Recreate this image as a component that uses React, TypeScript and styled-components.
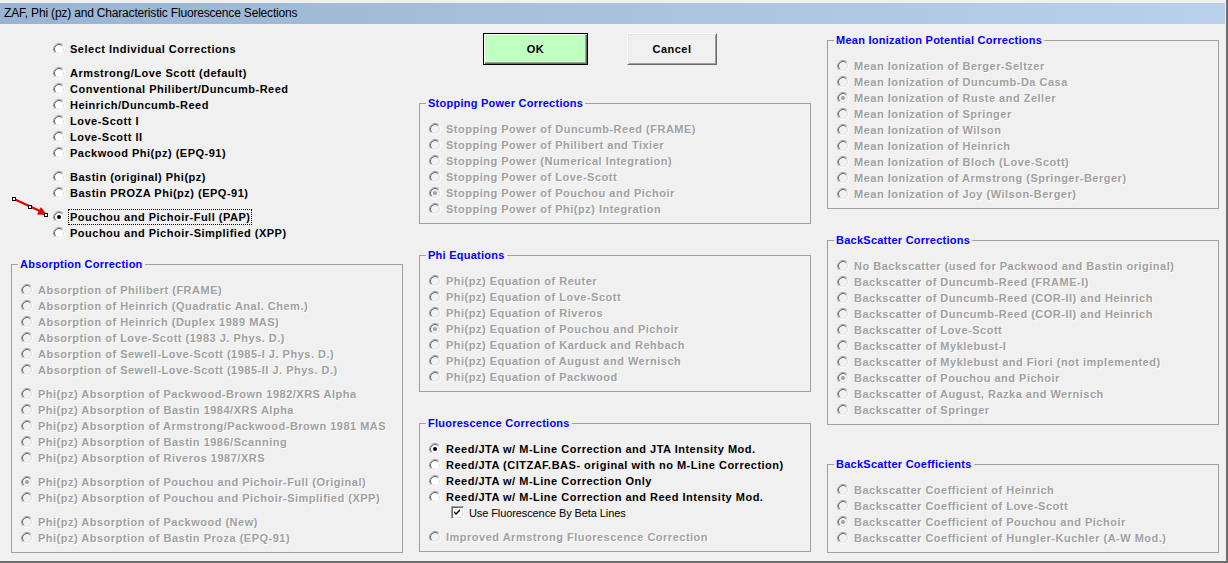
import React from "react";
import styled, { createGlobalStyle } from "styled-components";

const GlobalStyle = createGlobalStyle`
  html, body { margin: 0; padding: 0; background: #f0f0f0; }
  body { font-family: "Liberation Sans", Arial, sans-serif; }
  * { box-sizing: border-box; }
`;

const Window = styled.div`
  position: relative;
  width: 1228px;
  height: 563px;
  background: #f0f0f0;
  padding-top: 3px;
  border-right: 2px solid #6d6d6d;
  border-bottom: 2px solid #6d6d6d;
  display: flex;
  flex-direction: column;
  overflow: hidden;
`;

const TitleBar = styled.div`
  height: 21px;
  margin-right: 1px;
  padding-left: 4px;
  background: linear-gradient(to right, #99b4d1, #b9d1ea);
  font-family: "Liberation Sans", Arial, sans-serif;
  font-size: 12px;
  letter-spacing: -0.18px;
  line-height: 21px;
  color: #000;
  white-space: nowrap;
`;

const Body = styled.div`
  display: grid;
  grid-template-columns: repeat(3, 392px);
  column-gap: 16px;
  padding-left: 11px;
  align-items: start;
`;

const Column = styled.div<{ $top: number }>`
  display: flex;
  flex-direction: column;
  padding-top: ${(p) => p.$top}px;
`;

const PlainList = styled.div`
  display: flex;
  flex-direction: column;
  gap: 8px;
  padding-left: 42px;
`;

const Block = styled.div`
  display: flex;
  flex-direction: column;
`;

const Group = styled.fieldset<{ $gapTop?: number }>`
  margin: ${(p) => p.$gapTop ?? 0}px 0 0 0;
  padding: 10px 0 7px 9px;
  border: 1px solid #a0a0a0;
  min-width: 0;
  display: flex;
  flex-direction: column;
  gap: 8px;
`;

const Legend = styled.legend`
  margin-left: -3px;
  padding: 0 2px;
  height: 14px;
  line-height: 15px;
  font-weight: bold;
  font-size: 11px;
  letter-spacing: 0.25px;
  color: #0000ff;
`;

const Row = styled.div<{ $disabled?: boolean }>`
  display: flex;
  align-items: flex-start;
  height: 16px;
  gap: 5px;
  font-size: 11px;
  font-weight: bold;
  letter-spacing: 0.5px;
  white-space: nowrap;
  color: ${(p) => (p.$disabled ? "#a0a0a0" : "#000")};
  text-shadow: ${(p) => (p.$disabled ? "1px 1px 0 #ffffff" : "none")};
`;

const Label = styled.span<{ $focused?: boolean }>`
  margin-top: 3px;
  line-height: 12px;
  height: 12px;
  outline: ${(p) => (p.$focused ? "1px dotted #000" : "none")};
  outline-offset: 1px;
`;

const RadioSvg = styled.svg`
  flex: none;
  width: 12px;
  height: 12px;
  margin-top: 3px;
`;

const Radio: React.FC<{ checked?: boolean; disabled?: boolean }> = ({ checked, disabled }) => (
  <RadioSvg viewBox="0 0 12 12">
    <circle cx="6" cy="6" r="5" fill={disabled ? "#f0f0f0" : "#ffffff"} />
    <path d="M2.11 9.89 A5.5 5.5 0 0 1 9.89 2.11" fill="none" stroke="#a0a0a0" strokeWidth="1" />
    <path d="M9.89 2.11 A5.5 5.5 0 0 1 2.11 9.89" fill="none" stroke="#ffffff" strokeWidth="1" />
    <path d="M2.82 9.18 A4.5 4.5 0 0 1 9.18 2.82" fill="none" stroke="#696969" strokeWidth="1" />
    <path d="M9.18 2.82 A4.5 4.5 0 0 1 2.82 9.18" fill="none" stroke="#e3e3e3" strokeWidth="1" />
    {checked && <circle cx="6" cy="6" r="2" fill={disabled ? "#a0a0a0" : "#000"} />}
  </RadioSvg>
);

const CheckRow = styled.div`
  display: flex;
  align-items: center;
  height: 16px;
  gap: 5px;
  padding-left: 22px;
  padding-top: 1px;
  font-size: 11px;
  letter-spacing: -0.1px;
  color: #000;
  white-space: nowrap;
`;

const CheckBox = styled.span`
  flex: none;
  width: 13px;
  height: 13px;
  background: #fff;
  border-top: 1px solid #a0a0a0;
  border-left: 1px solid #a0a0a0;
  border-bottom: 1px solid #fff;
  border-right: 1px solid #fff;
  box-shadow: inset 1px 1px 0 #696969, inset -1px -1px 0 #e3e3e3;
  display: flex;
  align-items: center;
  justify-content: center;
`;

const ButtonRow = styled.div`
  display: flex;
  gap: 39px;
  padding-left: 64px;
`;

const Button = styled.button<{ $default?: boolean }>`
  height: 32px;
  width: ${(p) => (p.$default ? 105 : 90)}px;
  font-family: "Liberation Sans", Arial, sans-serif;
  font-size: 11px;
  font-weight: bold;
  letter-spacing: 0.5px;
  color: #000;
  background: ${(p) => (p.$default ? "#c0ffc0" : "#f0f0f0")};
  border: 1px solid;
  border-color: ${(p) => (p.$default ? "#000" : "#fff #696969 #696969 #fff")};
  box-shadow: ${(p) =>
    p.$default
      ? "inset 1px 1px 0 #fff, inset -1px -1px 0 #696969, inset -2px -2px 0 #a0a0a0"
      : "inset 1px 1px 0 #e3e3e3, inset -1px -1px 0 #a0a0a0"};
  padding: 0;
  margin: 0;
`;

const Arrow = styled.svg`
  position: absolute;
  left: 10px;
  top: 194px;
  width: 42px;
  height: 26px;
`;

type Opt = { t: string; c?: boolean; f?: boolean };

const Options: React.FC<{ items: Opt[]; disabled?: boolean }> = ({ items, disabled }) => (
  <Block>
    {items.map((o, i) => (
      <Row key={i} $disabled={disabled}>
        <Radio checked={o.c} disabled={disabled} />
        <Label $focused={o.f}>{o.t}</Label>
      </Row>
    ))}
  </Block>
);

const o = (t: string, c?: boolean, f?: boolean): Opt => ({ t, c, f });

const leftList: Opt[][] = [
  [o("Select Individual Corrections")],
  [
    o("Armstrong/Love Scott (default)"),
    o("Conventional Philibert/Duncumb-Reed"),
    o("Heinrich/Duncumb-Reed"),
    o("Love-Scott I"),
    o("Love-Scott II"),
    o("Packwood Phi(pz) (EPQ-91)"),
  ],
  [o("Bastin (original) Phi(pz)"), o("Bastin PROZA Phi(pz) (EPQ-91)")],
  [o("Pouchou and Pichoir-Full (PAP)", true, true), o("Pouchou and Pichoir-Simplified (XPP)")],
];

const absorption: Opt[][] = [
  [
    o("Absorption of Philibert (FRAME)"),
    o("Absorption of Heinrich (Quadratic Anal. Chem.)"),
    o("Absorption of Heinrich (Duplex 1989 MAS)"),
    o("Absorption of Love-Scott (1983 J. Phys. D.)"),
    o("Absorption of Sewell-Love-Scott (1985-I J. Phys. D.)"),
    o("Absorption of Sewell-Love-Scott (1985-II J. Phys. D.)"),
  ],
  [
    o("Phi(pz) Absorption of Packwood-Brown 1982/XRS Alpha"),
    o("Phi(pz) Absorption of Bastin 1984/XRS Alpha"),
    o("Phi(pz) Absorption of Armstrong/Packwood-Brown 1981 MAS"),
    o("Phi(pz) Absorption of Bastin 1986/Scanning"),
    o("Phi(pz) Absorption of Riveros 1987/XRS"),
  ],
  [
    o("Phi(pz) Absorption of Pouchou and Pichoir-Full (Original)", true),
    o("Phi(pz) Absorption of Pouchou and Pichoir-Simplified (XPP)"),
  ],
  [o("Phi(pz) Absorption of Packwood (New)"), o("Phi(pz) Absorption of Bastin Proza (EPQ-91)")],
];

const stopping: Opt[] = [
  o("Stopping Power of Duncumb-Reed (FRAME)"),
  o("Stopping Power of Philibert and Tixier"),
  o("Stopping Power (Numerical Integration)"),
  o("Stopping Power of Love-Scott"),
  o("Stopping Power of Pouchou and Pichoir", true),
  o("Stopping Power of Phi(pz) Integration"),
];

const phiEq: Opt[] = [
  o("Phi(pz) Equation of Reuter"),
  o("Phi(pz) Equation of Love-Scott"),
  o("Phi(pz) Equation of Riveros"),
  o("Phi(pz) Equation of Pouchou and Pichoir", true),
  o("Phi(pz) Equation of Karduck and Rehbach"),
  o("Phi(pz) Equation of August and Wernisch"),
  o("Phi(pz) Equation of Packwood"),
];

const fluor: Opt[] = [
  o("Reed/JTA w/ M-Line Correction and JTA Intensity Mod.", true),
  o("Reed/JTA (CITZAF.BAS- original with no M-Line Correction)"),
  o("Reed/JTA w/ M-Line Correction Only"),
  o("Reed/JTA w/ M-Line Correction and Reed Intensity Mod."),
];

const meanIon: Opt[] = [
  o("Mean Ionization of Berger-Seltzer"),
  o("Mean Ionization of Duncumb-Da Casa"),
  o("Mean Ionization of Ruste and Zeller", true),
  o("Mean Ionization of Springer"),
  o("Mean Ionization of Wilson"),
  o("Mean Ionization of Heinrich"),
  o("Mean Ionization of Bloch (Love-Scott)"),
  o("Mean Ionization of Armstrong (Springer-Berger)"),
  o("Mean Ionization of Joy (Wilson-Berger)"),
];

const backCorr: Opt[] = [
  o("No Backscatter (used for Packwood and Bastin original)"),
  o("Backscatter of Duncumb-Reed (FRAME-I)"),
  o("Backscatter of Duncumb-Reed (COR-II) and Heinrich"),
  o("Backscatter of Duncumb-Reed (COR-II) and Heinrich"),
  o("Backscatter of Love-Scott"),
  o("Backscatter of Myklebust-I"),
  o("Backscatter of Myklebust and Fiori (not implemented)"),
  o("Backscatter of Pouchou and Pichoir", true),
  o("Backscatter of August, Razka and Wernisch"),
  o("Backscatter of Springer"),
];

const backCoef: Opt[] = [
  o("Backscatter Coefficient of Heinrich"),
  o("Backscatter Coefficient of Love-Scott"),
  o("Backscatter Coefficient of Pouchou and Pichoir", true),
  o("Backscatter Coefficient of Hungler-Kuchler (A-W Mod.)"),
];

export default function App() {
  return (
    <>
      <GlobalStyle />
      <Window>
        <TitleBar>ZAF, Phi (pz) and Characteristic Fluorescence Selections</TitleBar>
        <Body>
          <Column $top={16}>
            <PlainList>
              {leftList.map((g, i) => (
                <Options key={i} items={g} />
              ))}
            </PlainList>
            <Group $gapTop={17}>
              <Legend>Absorption Correction</Legend>
              {absorption.map((g, i) => (
                <Options key={i} items={g} disabled />
              ))}
            </Group>
          </Column>

          <Column $top={9}>
            <ButtonRow>
              <Button $default>OK</Button>
              <Button>Cancel</Button>
            </ButtonRow>
            <Group $gapTop={31}>
              <Legend>Stopping Power Corrections</Legend>
              <Options items={stopping} disabled />
            </Group>
            <Group $gapTop={24}>
              <Legend>Phi Equations</Legend>
              <Options items={phiEq} disabled />
            </Group>
            <Group $gapTop={24}>
              <Legend>Fluorescence Corrections</Legend>
              <Block>
                <Options items={fluor} />
                <CheckRow>
                  <CheckBox>
                    <svg width="7" height="7" viewBox="0 0 7 7">
                      <path d="M0 2 L2 4 L6 0 L6 2 L2 6 L0 4 Z" fill="#000" />
                    </svg>
                  </CheckBox>
                  <span>Use Fluorescence By Beta Lines</span>
                </CheckRow>
              </Block>
              <Options items={[o("Improved Armstrong Fluorescence Correction")]} disabled />
            </Group>
          </Column>

          <Column $top={9}>
            <Group>
              <Legend>Mean Ionization Potential Corrections</Legend>
              <Options items={meanIon} disabled />
            </Group>
            <Group $gapTop={24}>
              <Legend>BackScatter Corrections</Legend>
              <Options items={backCorr} disabled />
            </Group>
            <Group $gapTop={32}>
              <Legend>BackScatter Coefficients</Legend>
              <Options items={backCoef} disabled />
            </Group>
          </Column>
        </Body>
        <Arrow viewBox="0 0 42 26">
          <line x1="4" y1="5" x2="31" y2="17.5" stroke="#e00000" strokeWidth="2" />
          <polygon points="37,21 27,20.5 31,13" fill="#e00000" />
          <rect x="2.5" y="3.5" width="3" height="3" fill="#fff" stroke="#000" strokeWidth="1" />
          <rect x="18.5" y="11.5" width="3" height="3" fill="#fff" stroke="#000" strokeWidth="1" />
          <rect x="34.5" y="19.5" width="3" height="3" fill="#fff" stroke="#000" strokeWidth="1" />
        </Arrow>
      </Window>
    </>
  );
}
